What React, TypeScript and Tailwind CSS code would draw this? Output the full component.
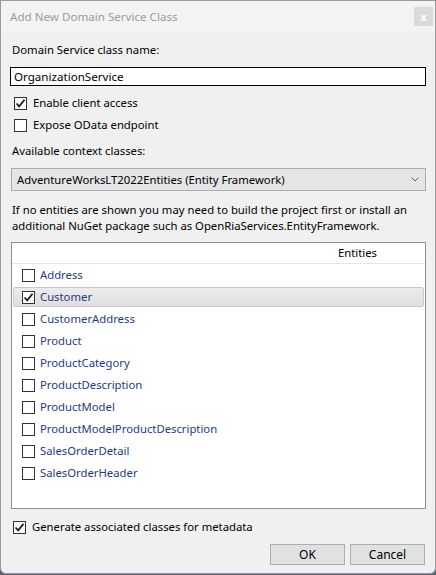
import React from 'react';

const entities = [
  'Address',
  'Customer',
  'CustomerAddress',
  'Product',
  'ProductCategory',
  'ProductDescription',
  'ProductModel',
  'ProductModelProductDescription',
  'SalesOrderDetail',
  'SalesOrderHeader',
];

const CheckBox: React.FC<{ checked?: boolean }> = ({ checked }) => (
  <div className="w-[13px] h-[13px] shrink-0 border border-[#333333] bg-white flex items-center justify-center">
    {checked && (
      <svg width="11" height="11" viewBox="0 0 11 11">
        <path d="M1.5 5.5 L4.2 8.3 L9.5 1.8" fill="none" stroke="#1a1a1a" strokeWidth="1.8" />
      </svg>
    )}
  </div>
);

const App: React.FC = () => {
  return (
    <div className="w-[436px] h-[575px] bg-[#5a6470]">
      <div
        className="w-[436px] h-[574px] bg-[#f0f0f0] border border-[#9a9a9a] rounded-b-[6px] overflow-hidden text-[11.3px] leading-[16px] text-black"
        style={{ fontFamily: '"Noto Sans", "Open Sans", sans-serif' }}
      >
        <div className="h-[31px] bg-[#f3f3f3] flex items-center justify-between pl-[9px] pr-[2px]">
          <span className="text-[#9b9b9b] text-[11.6px]">Add New Domain Service Class</span>
          <div className="w-[19px] h-[19px] bg-[#dadada] flex items-center justify-center text-white text-[11px] font-bold leading-none">
            x
          </div>
        </div>

        <div className="px-[9px]">
          <div className="mt-[10px] pl-[2px]">Domain Service class name:</div>
          <div className="mt-[9px] h-[19px] border border-black bg-white pl-[3px] flex items-center text-[11.6px]">
            OrganizationService
          </div>

          <div className="mt-[9px] ml-[4px] flex items-center gap-[6px]">
            <CheckBox checked />
            <span>Enable client access</span>
          </div>
          <div className="mt-[6px] ml-[4px] flex items-center gap-[6px]">
            <CheckBox />
            <span>Expose OData endpoint</span>
          </div>

          <div className="mt-[10px] pl-[2px]">Available context classes:</div>
          <div className="mt-[9px] ml-px h-[23px] border border-[#acacac] bg-[#e5e5e5] flex items-center justify-between pl-[5px] pr-[6px]">
            <span>AdventureWorksLT2022Entities (Entity Framework)</span>
            <svg width="8" height="5" viewBox="0 0 8 5">
              <path d="M0.5 0.5 L4 4 L7.5 0.5" fill="none" stroke="#606060" strokeWidth="1" />
            </svg>
          </div>

          <div className="mt-[11px] pl-[2px] whitespace-nowrap">
            If no entities are shown you may need to build the project first or install an
            <br />
            additional NuGet package such as OpenRiaServices.EntityFramework.
          </div>

          <div className="mt-[8px] ml-px h-[267px] border border-[#8a8f97] bg-white flex flex-col">
            <div className="h-[21px] border-b border-[#e5e5e5] flex items-center justify-end pr-[48px]">
              Entities
            </div>
            {entities.map((name) => {
              const selected = name === 'Customer';
              return (
                <div key={name} className="h-[22px] px-[1px] py-[1px]">
                  <div
                    className={
                      selected
                        ? 'h-full rounded-[2px] border border-[#c9c9c9] bg-gradient-to-b from-[#ececec] to-[#dedede] flex items-center gap-[5px] pl-[8px]'
                        : 'h-full border border-transparent flex items-center gap-[5px] pl-[8px]'
                    }
                  >
                    <CheckBox checked={selected} />
                    <span className="text-[#1e3a8a]">{name}</span>
                  </div>
                </div>
              );
            })}
          </div>

          <div className="mt-[10px] ml-[3px] flex items-center gap-[6px]">
            <CheckBox checked />
            <span>Generate associated classes for metadata</span>
          </div>

          <div className="mt-[9px] flex justify-end gap-[5px] pr-[1px]">
            <button className="w-[75px] h-[21px] border border-[#adadad] bg-[#e1e1e1] text-[12px] leading-none">
              OK
            </button>
            <button className="w-[75px] h-[21px] border border-[#adadad] bg-[#e1e1e1] text-[12px] leading-none">
              Cancel
            </button>
          </div>
        </div>
      </div>
    </div>
  );
};

export default App;
